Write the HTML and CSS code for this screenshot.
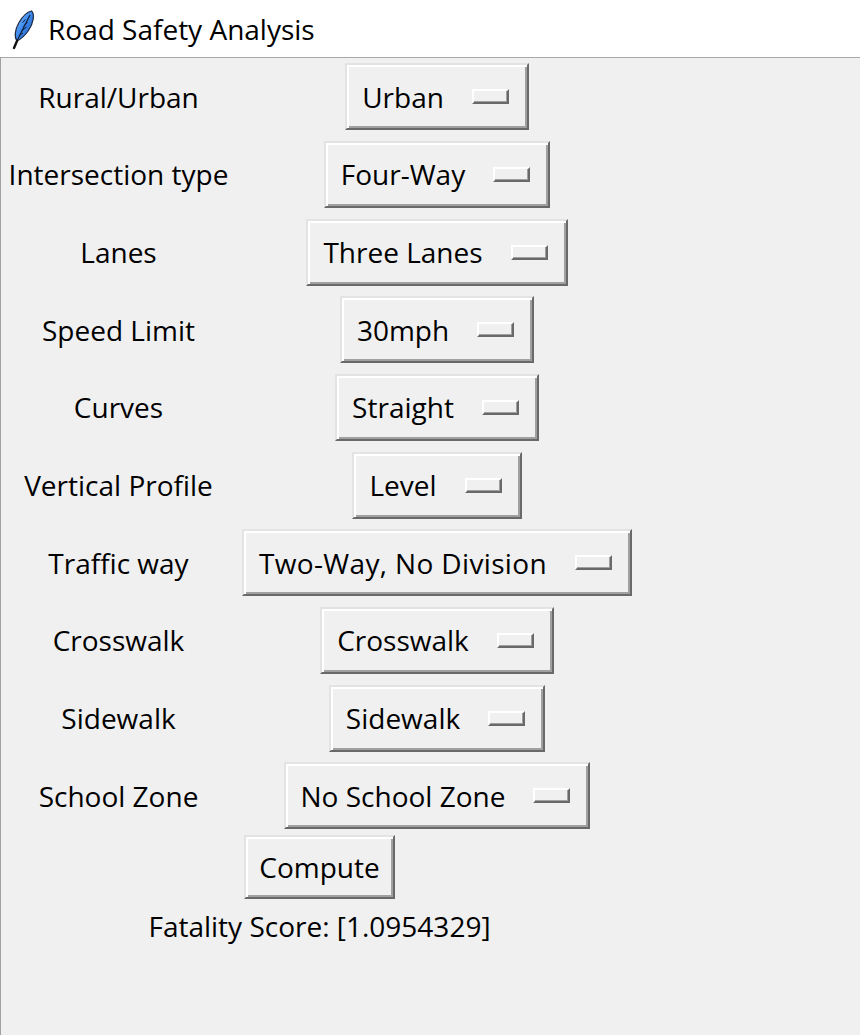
FILE: index.html
```html
<!DOCTYPE html>
<html lang="en">
<head>
<meta charset="utf-8">
<title>Road Safety Analysis</title>
<link rel="stylesheet" href="styles.css">
</head>
<body>
<div class="titlebar">
  <svg class="feather" width="26" height="40" viewBox="0 0 26 40">
    <defs>
      <linearGradient id="fg" x1="0" y1="0" x2="1" y2="1">
        <stop offset="0" stop-color="#a9d0ff"/>
        <stop offset="0.45" stop-color="#3f8cf0"/>
        <stop offset="1" stop-color="#1d55b5"/>
      </linearGradient>
    </defs>
    <path d="M22.5 1 C26 4 24.5 13 19.5 20.5 C16 25.5 12 29 8 31 C5 27 6 19.5 10 12.5 C13.5 6.5 18 2 22.5 1 Z" fill="url(#fg)" stroke="#1c2a44" stroke-width="1.2"/>
    <path d="M21 5 C17.5 12 13 20.5 8 31" fill="none" stroke="#0f1c33" stroke-width="1.1"/>
    <path d="M16.5 9.5 L13.5 12.5 M18.5 12 L14.5 16.5 M17.5 17 L12.5 21 M14 23 L11 25" stroke="#0f1c33" stroke-width="1"/>
    <path d="M8 31 L5 38" stroke="#111" stroke-width="2.4" stroke-linecap="round"/>
  </svg>
  <span class="title">Road Safety Analysis</span>
</div>
<div class="window">
  <div class="form">
    <div class="label">Rural/Urban</div>
    <div class="menu"><span>Urban</span><i class="ind"></i></div>

    <div class="label">Intersection type</div>
    <div class="menu"><span>Four-Way</span><i class="ind"></i></div>

    <div class="label">Lanes</div>
    <div class="menu"><span>Three Lanes</span><i class="ind"></i></div>

    <div class="label">Speed Limit</div>
    <div class="menu"><span>30mph</span><i class="ind"></i></div>

    <div class="label">Curves</div>
    <div class="menu"><span>Straight</span><i class="ind"></i></div>

    <div class="label">Vertical Profile</div>
    <div class="menu"><span>Level</span><i class="ind"></i></div>

    <div class="label">Traffic way</div>
    <div class="menu"><span class="wide">Two-Way, No Division</span><i class="ind"></i></div>

    <div class="label">Crosswalk</div>
    <div class="menu"><span>Crosswalk</span><i class="ind"></i></div>

    <div class="label">Sidewalk</div>
    <div class="menu"><span>Sidewalk</span><i class="ind"></i></div>

    <div class="label">School Zone</div>
    <div class="menu"><span>No School Zone</span><i class="ind"></i></div>

    <div class="span compute-row"><div class="button">Compute</div></div>
    <div class="span result">Fatality Score: [1.0954329]</div>
  </div>
</div>
</body>
</html>
```

FILE: styles.css
```css
* { box-sizing: border-box; }

html, body {
  margin: 0;
  padding: 0;
  height: 100%;
  background: #ffffff;
  font-family: "Open Sans", "Noto Sans", sans-serif;
  color: #000;
}

.titlebar {
  height: 57px;
  display: flex;
  align-items: center;
  background: #ffffff;
}

.feather {
  margin-left: 9px;
  margin-top: 2px;
  flex: none;
}

.title {
  margin-left: 13px;
  font-size: 28px;
  margin-top: 1px;
}

.window {
  height: calc(100% - 57px);
  background: #f0f0f0;
  border-top: 1px solid #a8a8a8;
  border-left: 1px solid #a0a0a0;
}

.form {
  display: grid;
  grid-template-columns: 235px 402px;
  grid-auto-rows: 77.67px;
  font-size: 28px;
}

.label {
  justify-self: center;
  align-self: center;
  white-space: nowrap;
  line-height: 1;
}

.menu {
  justify-self: center;
  align-self: center;
  height: 67px;
  display: flex;
  align-items: center;
  padding: 0 18px 0 15px;
  background: #f0f0f0;
  border-style: solid;
  border-width: 2px;
  border-color: #e3e3e3 #696969 #696969 #e3e3e3;
  box-shadow: inset 2px 2px #ffffff, inset -2px -2px #a0a0a0;
  white-space: nowrap;
  line-height: 1;
}

.menu .wide {
  letter-spacing: 0.35px;
}

.ind {
  display: block;
  width: 37px;
  height: 15px;
  margin-left: 28px;
  border-style: solid;
  border-width: 2px;
  border-color: #ffffff #696969 #696969 #ffffff;
  box-shadow: inset -1px -1px #a0a0a0;
  background: #f0f0f0;
}

.span {
  grid-column: 1 / 3;
  justify-self: center;
}

.compute-row {
  height: 64px;
  align-self: start;
}

.button {
  height: 64px;
  display: flex;
  align-items: center;
  padding: 0 13px;
  background: #f0f0f0;
  border-style: solid;
  border-width: 2px;
  border-color: #e3e3e3 #696969 #696969 #e3e3e3;
  box-shadow: inset 2px 2px #ffffff, inset -2px -2px #a0a0a0;
  line-height: 1;
}

.result {
  align-self: start;
  line-height: 1;
  white-space: nowrap;
}
```
